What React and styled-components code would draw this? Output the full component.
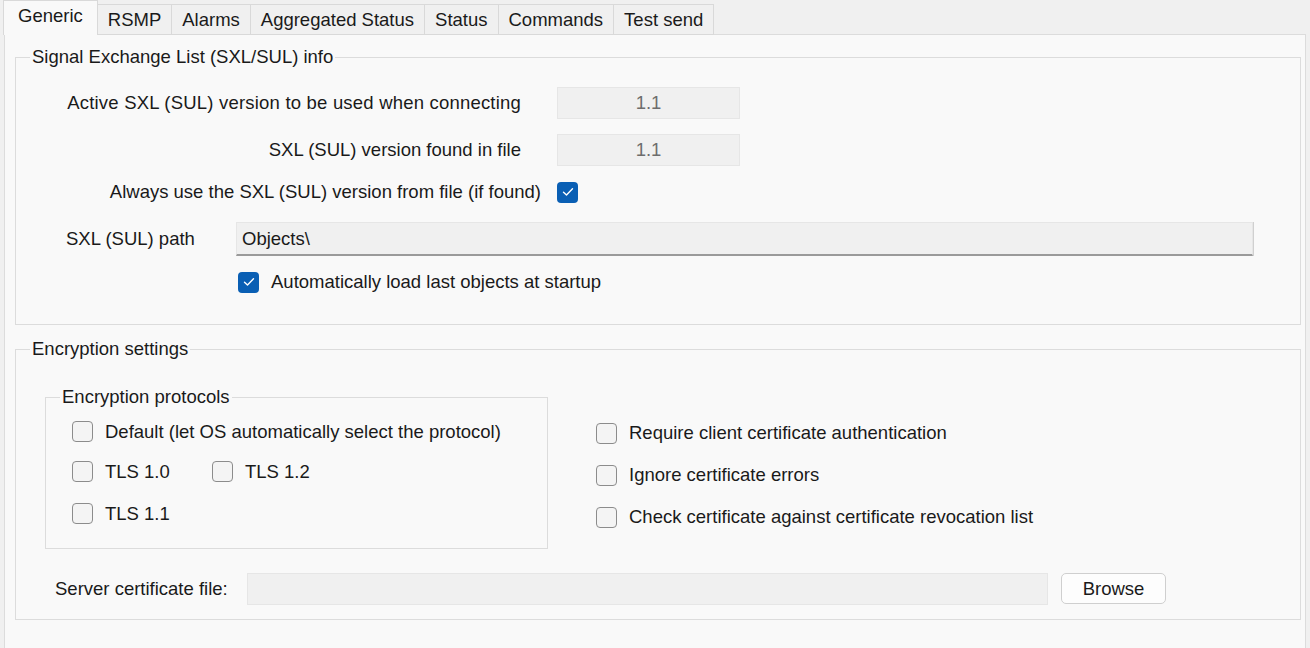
import React from 'react'
import styled, { createGlobalStyle } from 'styled-components'

const Global = createGlobalStyle`
  html, body { margin: 0; padding: 0; background: #f0f0f0; }
  body {
    font-family: "Liberation Sans", Arial, sans-serif;
    font-size: 18.5px;
    color: #1a1a1a;
    width: 1310px;
    height: 648px;
    overflow: hidden;
  }
`

const Window = styled.div`
  padding: 0 4px 0 4px;
  height: 648px;
  box-sizing: border-box;
`

const TabStrip = styled.div`
  display: flex;
  align-items: flex-end;
  height: 35px;
  padding-left: 0;
`

const Tab = styled.div`
  height: ${p => (p.$active ? '35px' : '31px')};
  box-sizing: border-box;
  padding: 0 ${p => (p.$active ? '14px' : '10px')};
  display: flex;
  align-items: center;
  padding-bottom: ${p => (p.$active ? '4px' : '0')};
  background: ${p => (p.$active ? '#f9f9f9' : '#f0f0f0')};
  border: 1px solid #d9d9d9;
  border-bottom: ${p => (p.$active ? 'none' : '1px solid #d9d9d9')};
  margin-left: -1px;
  position: relative;
  z-index: ${p => (p.$active ? 2 : 1)};
  white-space: nowrap;
`

const Page = styled.div`
  background: #f9f9f9;
  border: 1px solid #dcdcdc;
  margin-top: -1px;
  height: 620px;
  padding: 12px 4px 0 10px;
  box-sizing: border-box;
`

const Group = styled.fieldset`
  margin: 0 0 ${p => p.$gap || 0}px 0;
  border: 1px solid #dcdcdc;
  border-radius: 0;
  padding: 0;
  width: ${p => (p.$w ? p.$w + 'px' : 'auto')};
  height: ${p => p.$h}px;
  box-sizing: border-box;
  min-width: 0;

  legend {
    padding: 0 2px;
    margin-left: 14px;
    line-height: 20px;
  }
`

const Row = styled.div`
  display: flex;
  align-items: center;
  height: ${p => p.$h || 32}px;
  margin-top: ${p => p.$mt || 0}px;
  padding-left: ${p => p.$pl || 0}px;
`

const Label = styled.div`
  width: ${p => p.$w}px;
  text-align: ${p => p.$align || 'right'};
  margin-right: ${p => p.$mr || 0}px;
  padding-left: ${p => p.$pl || 0}px;
  box-sizing: border-box;
  white-space: nowrap;
  flex-shrink: 0;
  letter-spacing: ${p => p.$ls || 0}px;
`

const ReadBox = styled.div`
  width: ${p => p.$w}px;
  height: 32px;
  box-sizing: border-box;
  background: #f0f0f0;
  border: 1px solid #e6e6e6;
  color: ${p => (p.$dim ? '#6d6d6d' : '#1a1a1a')};
  display: flex;
  align-items: center;
  justify-content: ${p => (p.$center ? 'center' : 'flex-start')};
  padding-left: ${p => (p.$center ? 0 : 5)}px;
  flex-shrink: 0;
`

const PathBox = styled(ReadBox)`
  height: 34px;
  border-bottom: 2px solid #9a9a9a;
  box-shadow: 1px 0 0 #d0d0d0;
`

const Box = styled.span`
  width: 21px;
  height: 21px;
  box-sizing: border-box;
  border-radius: 4px;
  flex-shrink: 0;
  display: inline-flex;
  align-items: center;
  justify-content: center;
  background: ${p => (p.$checked ? '#0a5fb4' : '#f4f4f4')};
  border: ${p => (p.$checked ? 'none' : '1.5px solid #8c8c8c')};
`

const Check = styled.label`
  display: flex;
  align-items: center;
  gap: 12px;
  width: ${p => (p.$w ? p.$w + 'px' : 'auto')};
  white-space: nowrap;
`

function CheckBox({ checked, children, w }) {
  return (
    <Check $w={w}>
      <Box $checked={checked}>
        {checked && (
          <svg width="12" height="10" viewBox="0 0 12 10">
            <path d="M1.5 5.2 L4.5 8 L10.5 1.8" fill="none" stroke="#fff" strokeWidth="1.4" strokeLinecap="round" strokeLinejoin="round" />
          </svg>
        )}
      </Box>
      {children}
    </Check>
  )
}

const Columns = styled.div`
  display: flex;
  align-items: flex-start;
  gap: 48px;
  padding-left: 29px;
  margin-top: 28px;
`

const RightChecks = styled.div`
  display: flex;
  flex-direction: column;
  padding-top: 35px;
  gap: 20px;
`

const CheckLine = styled.div`
  display: flex;
  align-items: center;
  height: 21px;
  padding-left: 26px;
  margin-top: ${p => p.$mt || 0}px;
`

const Button = styled.button`
  width: 105px;
  height: 31px;
  margin-left: 13px;
  background: #fdfdfd;
  border: 1px solid #cfcfcf;
  border-radius: 5px;
  font: inherit;
  color: #1a1a1a;
  padding: 0;
`

const tabs = ['Generic', 'RSMP', 'Alarms', 'Aggregated Status', 'Status', 'Commands', 'Test send']

export default function App() {
  return (
    <Window>
      <Global />
      <TabStrip>
        {tabs.map((t, i) => (
          <Tab key={t} $active={i === 0}>{t}</Tab>
        ))}
      </TabStrip>
      <Page>
        <Group $h={278} $gap={14}>
          <legend>Signal Exchange List (SXL/SUL) info</legend>
          <Row $mt={20}>
            <Label $w={505} $mr={36} $ls={0.2}>Active SXL (SUL) version to be used when connecting</Label>
            <ReadBox $w={183} $center $dim>1.1</ReadBox>
          </Row>
          <Row $mt={15}>
            <Label $w={505} $mr={36}>SXL (SUL) version found in file</Label>
            <ReadBox $w={183} $center $dim>1.1</ReadBox>
          </Row>
          <Row $mt={10} $h={32}>
            <Label $w={525} $mr={16}>Always use the SXL (SUL) version from file (if found)</Label>
            <CheckBox checked />
          </Row>
          <Row $mt={14} $h={34}>
            <Label $w={220} $align="left" $pl={50}>SXL (SUL) path</Label>
            <PathBox $w={1017}>Objects\</PathBox>
          </Row>
          <Row $mt={10} $pl={222}>
            <CheckBox checked>Automatically load last objects at startup</CheckBox>
          </Row>
        </Group>

        <Group $h={281}>
          <legend>Encryption settings</legend>
          <Columns>
            <Group $h={162} $w={503}>
              <legend>Encryption protocols</legend>
              <CheckLine $mt={14}>
                <CheckBox>Default (let OS automatically select the protocol)</CheckBox>
              </CheckLine>
              <CheckLine $mt={19}>
                <CheckBox w={140}>TLS 1.0</CheckBox>
                <CheckBox>TLS 1.2</CheckBox>
              </CheckLine>
              <CheckLine $mt={21}>
                <CheckBox>TLS 1.1</CheckBox>
              </CheckLine>
            </Group>
            <RightChecks>
              <CheckBox>Require client certificate authentication</CheckBox>
              <CheckBox>Ignore certificate errors</CheckBox>
              <CheckBox>Check certificate against certificate revocation list</CheckBox>
            </RightChecks>
          </Columns>
          <Row $mt={23} $h={33} $pl={39}>
            <Label $w={192} $align="left">Server certificate file:</Label>
            <ReadBox $w={801} />
            <Button>Browse</Button>
          </Row>
        </Group>
      </Page>
    </Window>
  )
}
